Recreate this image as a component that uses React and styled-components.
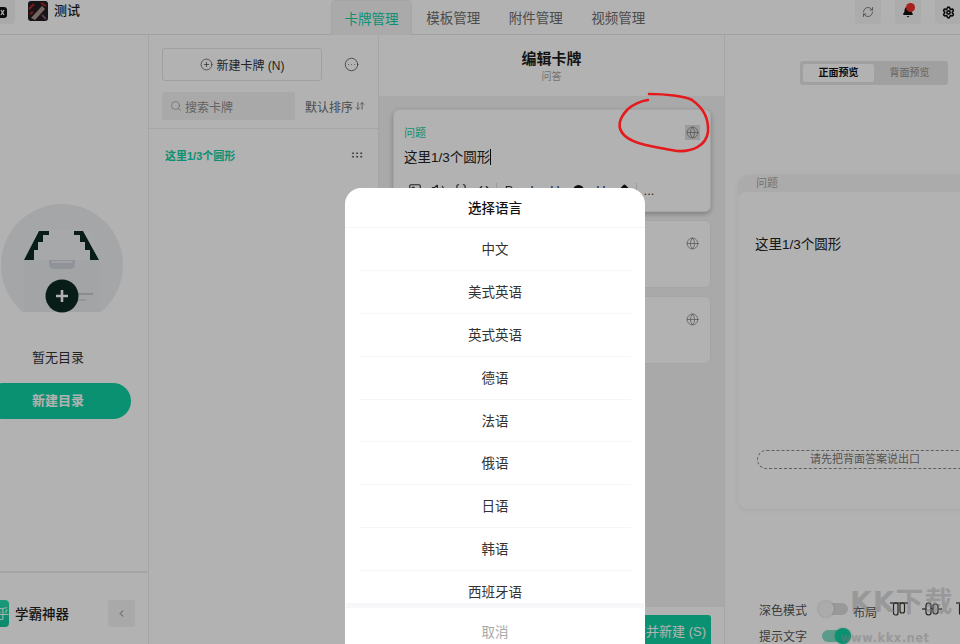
import React from "react";
import styled, { createGlobalStyle } from "styled-components";
import {
  ArrowDownUp,
  Bell,
  Braces,
  ChevronLeft,
  CircleEllipsis,
  CirclePlus,
  Code,
  Globe,
  GripHorizontal,
  Image,
  RefreshCw,
  Search,
  Settings,
  Volume2,
} from "lucide-react";

const GREEN = "#0fd0a4";
const FONT = `"Liberation Sans", "Noto Sans CJK SC", sans-serif`;

const GlobalStyle = createGlobalStyle`
  html, body {
    margin: 0;
    height: 100%;
    overflow: hidden;
    background: #fff;
  }
  body {
    font-family: ${FONT};
    color: #1d1d1d;
  }
  * { box-sizing: border-box; }
`;

const Viewport = styled.div`
  position: relative;
  width: 960px;
  height: 644px;
  overflow: hidden;
`;

const Shell = styled.div`
  display: flex;
  flex-direction: column;
  width: 1010px;
  height: 644px;
  margin-left: -15px;
`;

const TopBar = styled.header`
  display: flex;
  align-items: flex-end;
  height: 35px;
  flex: none;
  border-bottom: 1px solid #e6e6e6;
  background: #fff;
`;

const Brand = styled.div`
  display: flex;
  align-items: flex-start;
  width: 346px;
  height: 100%;
`;

const BackButton = styled.div`
  display: flex;
  align-items: center;
  width: 30px;
  height: 24px;
  background: #f4f4f4;
  border-radius: 0 0 4px 4px;
  svg { display: block; }
`;

const Avatar = styled.svg`
  width: 20px;
  height: 20px;
  margin: 1px 6px 0 13px;
  border-radius: 3px;
`;

const BrandName = styled.span`
  font-size: 13px;
  line-height: 22px;
  font-weight: 500;
`;

const Tabs = styled.nav`
  display: flex;
  height: 34px;
`;

const Tab = styled.div`
  width: ${(p) => (p.$active ? "81px" : "82.5px")};
  margin-bottom: -1px;
  text-align: center;
  font-size: 13.5px;
  line-height: 37px;
  color: ${(p) => (p.$active ? GREEN : "#6d6d6d")};
  ${(p) =>
    p.$active &&
    `
    background: #f4f4f4;
    border: 1px solid #ececec;
    border-bottom: 0;
    border-radius: 5px 5px 0 0;
  `}
`;

const TopActions = styled.div`
  display: flex;
  align-items: flex-start;
  gap: 14px;
  margin-left: auto;
  padding-right: 34px;
  height: 100%;
`;

const TopAction = styled.div`
  position: relative;
  display: flex;
  align-items: center;
  justify-content: center;
  width: 26px;
  height: 24px;
  background: #f6f6f6;
  border-radius: 0 0 4px 4px;
  color: #555;
`;

const BellDot = styled.span`
  position: absolute;
  top: 3px;
  left: 11px;
  width: 9px;
  height: 9px;
  border-radius: 50%;
  background: #f0302c;
`;

const Columns = styled.div`
  display: flex;
  flex: 1;
  min-height: 0;
`;

const Sidebar = styled.aside`
  display: flex;
  flex-direction: column;
  width: 164px;
  flex: none;
  border-right: 1px solid #ececec;
`;

const EmptyState = styled.div`
  display: flex;
  flex-direction: column;
  align-items: center;
  justify-content: flex-end;
  flex: 1;
  width: 146px;
  padding-bottom: 152px;
`;

const Illustration = styled.svg`
  width: 124px;
  height: 110px;
  margin-left: 10px;
  flex: none;
`;

const EmptyText = styled.div`
  margin-top: 35px;
  font-size: 13px;
  line-height: 20px;
  color: #333;
`;

const CreateButton = styled.div`
  width: 146px;
  height: 36px;
  margin-top: 15px;
  border-radius: 18px;
  background: ${GREEN};
  color: #fff;
  font-size: 13px;
  font-weight: 700;
  line-height: 36px;
  text-align: center;
`;

const SideFooter = styled.div`
  display: flex;
  align-items: center;
  height: 73px;
  flex: none;
  border-top: 2px solid #ececec;
  padding: 9px 13px 0 0;
`;

const AppLogo = styled.div`
  width: 24px;
  height: 27px;
  margin-right: 6px;
  border-radius: 0 4px 4px 0;
  background: linear-gradient(180deg, #26dcb0, #0fc49b);
  color: #e9fff8;
  font-size: 13px;
  line-height: 27px;
  text-align: right;
`;

const AppName = styled.span`
  font-size: 13.5px;
  font-weight: 500;
`;

const Collapse = styled.div`
  display: flex;
  align-items: center;
  justify-content: center;
  width: 27px;
  height: 27px;
  margin-left: auto;
  border-radius: 3px;
  background: #f3f3f3;
  color: #666;
`;

const CardColumn = styled.section`
  width: 230px;
  flex: none;
  border-right: 1px solid #ececec;
`;

const CardTools = styled.div`
  height: 94px;
  padding: 13px 13px 0 13px;
  border-bottom: 1px solid #eeeeee;
`;

const ToolRow = styled.div`
  display: flex;
  align-items: center;
  justify-content: space-between;
`;

const NewCard = styled.div`
  display: flex;
  align-items: center;
  justify-content: center;
  gap: 4px;
  width: 160px;
  height: 33px;
  border: 1px solid #e4e4e4;
  border-radius: 3px;
  font-size: 12px;
  color: #333;
`;

const MoreButton = styled.div`
  display: flex;
  margin-right: 6px;
  color: #444;
`;

const SearchBox = styled.div`
  display: flex;
  align-items: center;
  gap: 3px;
  width: 133px;
  height: 28px;
  padding-left: 8px;
  border-radius: 3px;
  background: #f3f3f3;
  color: #8d8d8d;
  font-size: 12px;
`;

const SortLabel = styled.div`
  display: flex;
  align-items: center;
  gap: 2px;
  color: #6d6d6d;
  font-size: 12px;
`;

const SearchRow = styled(ToolRow)`
  margin-top: 11px;
`;

const CardItem = styled.div`
  display: flex;
  align-items: center;
  justify-content: space-between;
  height: 52px;
  padding: 0 14px 0 16px;
  color: ${GREEN};
  font-size: 11px;
  font-weight: 700;
  svg { color: #555; }
`;

const Editor = styled.section`
  display: flex;
  flex-direction: column;
  width: 346px;
  flex: none;
  border-right: 1px solid #ececec;
`;

const EditorHead = styled.div`
  height: 61px;
  padding-top: 14px;
  flex: none;
  text-align: center;
`;

const EditorTitle = styled.div`
  font-size: 15px;
  line-height: 20px;
  font-weight: 700;
`;

const EditorSub = styled.div`
  font-size: 10px;
  line-height: 15px;
  color: #a5a5a5;
`;

const EditorBody = styled.div`
  display: flex;
  flex-direction: column;
  gap: 8px;
  flex: 1;
  padding: 13px 13px 0 14px;
  background: #f3f3f3;
`;

const FieldCard = styled.div`
  height: ${(p) => (p.$open ? "103px" : "68px")};
  padding: 14px 10px 0;
  border-radius: 6px;
  background: #fff;
  border: 1px solid #ededed;
  ${(p) => p.$open && "box-shadow: 0 2px 5px rgba(0, 0, 0, 0.25);"}
`;

const FieldHead = styled.div`
  display: flex;
  align-items: center;
  justify-content: space-between;
  height: 16px;
  color: ${GREEN};
  font-size: 11px;
`;

const GlobeBox = styled.span`
  display: flex;
  align-items: center;
  justify-content: center;
  width: 15px;
  height: 15px;
  color: #777;
  background: ${(p) => (p.$on ? "#dedede" : "transparent")};
`;

const FieldText = styled.div`
  margin-top: 9px;
  font-size: 13.5px;
  line-height: 18px;
  color: #222;
`;

const Caret = styled.span`
  display: inline-block;
  width: 1px;
  height: 16px;
  vertical-align: -3px;
  background: #111;
`;

const FormatBar = styled.div`
  display: flex;
  align-items: center;
  gap: 9px;
  margin-top: 15px;
  height: 16px;
  padding-left: 4px;
  font-size: 13px;
  color: #333;
`;

const FormatGlyph = styled.span`
  display: flex;
  justify-content: center;
  width: 14px;
`;

const FormatSep = styled.span`
  width: 1px;
  height: 15px;
  margin: 0 -4px;
  background: #ddd;
`;

const Dot = styled.span`
  display: block;
  width: ${(p) => (p.$diamond ? "9px" : "11px")};
  height: ${(p) => (p.$diamond ? "9px" : "11px")};
  background: #111;
  border-radius: ${(p) => (p.$diamond ? "1px" : "50%")};
  ${(p) => p.$diamond && "transform: rotate(45deg);"}
`;

const EditorFoot = styled.div`
  display: flex;
  justify-content: flex-end;
  height: 37px;
  flex: none;
  padding: 8px 13px 0 0;
`;

const SaveButton = styled.div`
  width: 150px;
  height: 29px;
  border-radius: 3px 3px 0 0;
  background: ${GREEN};
  color: #fff;
  font-size: 13px;
  line-height: 33px;
  text-align: right;
  padding-right: 5px;
`;

const Preview = styled.section`
  display: flex;
  flex-direction: column;
  flex: 1;
  min-width: 0;
  padding: 26px 0 0 13px;
`;

const Toggle = styled.div`
  display: flex;
  align-items: center;
  width: 148px;
  height: 24px;
  margin-left: 62px;
  padding: 3px;
  border-radius: 3px;
  background: #e6e6e6;
  font-size: 10px;
  text-align: center;
`;

const ToggleItem = styled.div`
  flex: 1;
  line-height: 18px;
  border-radius: 2px;
  font-weight: ${(p) => (p.$active ? 700 : 500)};
  color: ${(p) => (p.$active ? "#111" : "#9b9b9b")};
  background: ${(p) => (p.$active ? "#fff" : "transparent")};
`;

const PreviewCard = styled.div`
  display: flex;
  flex-direction: column;
  width: 270px;
  height: 337px;
  margin-top: 90px;
  border-radius: 10px;
  background: #f5f5f5;
  box-shadow: 0 1px 5px rgba(0, 0, 0, 0.06);
  overflow: hidden;
`;

const PreviewTag = styled.div`
  height: 17px;
  padding-left: 18px;
  font-size: 11px;
  line-height: 16px;
  color: #a5a5a5;
`;

const PreviewFace = styled.div`
  display: flex;
  flex-direction: column;
  flex: 1;
  padding: 41px 19px 0 17px;
  background: #fff;
  border-radius: 8px 0 0 0;
  font-size: 13.5px;
  color: #222;
`;

const HintPill = styled.div`
  width: 216px;
  height: 19px;
  margin: 197px 0 0 2px;
  border: 1px dashed #888;
  border-radius: 10px;
  font-size: 11px;
  line-height: 17px;
  text-align: center;
  color: #777;
`;

const Options = styled.div`
  display: grid;
  grid-template-columns: 59px 1fr;
  row-gap: 7px;
  align-items: center;
  margin-top: 89px;
  padding-left: 21px;
  font-size: 12px;
  color: #555;
`;

const OptionRow = styled.div`
  display: flex;
  align-items: center;
  gap: 5px;
`;

const Switch = styled.div`
  position: relative;
  width: ${(p) => (p.$on ? "28px" : "30px")};
  height: 12px;
  margin-left: ${(p) => (p.$on ? "4px" : "0")};
  border-radius: 6px;
  background: ${(p) => (p.$on ? "#82dec8" : "#dcdcdc")};
  &::after {
    content: "";
    position: absolute;
    top: -2px;
    left: ${(p) => (p.$on ? "13px" : "0")};
    width: 16px;
    height: 16px;
    border-radius: 50%;
    background: ${(p) => (p.$on ? GREEN : "#f5f5f5")};
    box-shadow: 0 0 2px rgba(0, 0, 0, 0.25);
  }
`;

const LayoutLabel = styled.span`
  padding-top: 5px;
`;

const LayoutIcon = styled.svg`
  width: 22px;
  height: 18px;
  margin-left: 6px;
  flex: none;
  fill: none;
  stroke: #333;
  stroke-width: 1.2;
`;

const Watermark = styled.div`
  position: absolute;
  left: 850px;
  top: 588px;
  z-index: 4;
  pointer-events: none;
  color: rgba(120, 120, 120, 0.45);
  font-family: "DejaVu Sans", "Noto Sans CJK SC", sans-serif;
  font-weight: 700;
  white-space: nowrap;
`;

const MarkBig = styled.div`
  font-size: 28px;
  line-height: 30px;
  letter-spacing: 1px;
`;

const MarkSmall = styled.div`
  margin: 14px 0 0 -10px;
  font-size: 11.5px;
  line-height: 12px;
  letter-spacing: 0.5px;
`;

const Mask = styled.div`
  position: absolute;
  inset: 0;
  z-index: 2;
  background: rgba(0, 0, 0, 0.3);
`;

const Scribble = styled.svg`
  position: absolute;
  inset: 0;
  z-index: 3;
  width: 960px;
  height: 644px;
  pointer-events: none;
`;

const Sheet = styled.div`
  position: absolute;
  left: 345px;
  top: 188px;
  z-index: 3;
  display: flex;
  flex-direction: column;
  width: 300px;
  height: 470px;
  border-radius: 16px 16px 0 0;
  background: #fff;
`;

const SheetTitle = styled.div`
  height: 40px;
  flex: none;
  border-bottom: 1px solid #f6f6f6;
  text-align: center;
  font-size: 13.5px;
  font-weight: 500;
  line-height: 41px;
  color: #111;
`;

const LangList = styled.div`
  height: 375px;
  flex: none;
  overflow: hidden;
`;

const LangRow = styled.div`
  height: 42.9px;
  margin: 0 14px;
  border-bottom: 1px solid #f6f6f6;
  text-align: center;
  font-size: 13.5px;
  line-height: 44px;
  color: #333;
`;

const SheetGap = styled.div`
  height: 5px;
  margin: 0 1px;
  flex: none;
  background: #f7f7f9;
`;

const CancelRow = styled.div`
  height: 48px;
  text-align: center;
  font-size: 13.5px;
  line-height: 49px;
  color: #a8a8a8;
`;

const LANGS = ["中文", "美式英语", "英式英语", "德语", "法语", "俄语", "日语", "韩语", "西班牙语"];

const TinyAvatar = () => (
  <Avatar viewBox="0 0 20 20">
    <rect width="20" height="20" fill="#241c22" />
    <path d="M3 17 L14 5 L17 8 L7 19 Z" fill="#a8978a" />
    <path d="M1 8 L6 3 M13 2 L18 5 M2 13 L5 11" stroke="#b02a2a" strokeWidth="2" />
    <path d="M14 14 L18 18" stroke="#6c5a70" strokeWidth="2" />
  </Avatar>
);

const EmptyArt = () => (
  <Illustration viewBox="0 0 124 110">
    <defs>
      <clipPath id="art-clip">
        <rect width="124" height="109" />
      </clipPath>
    </defs>
    <g clipPath="url(#art-clip)">
      <circle cx="61" cy="62" r="61" fill="#eceef1" />
      <path d="M36 27 H88 L98 57 H26 Z" fill="#f0f1f4" />
      <path d="M23 57 L38 28 H48 V32 H42 V39 H37 V47 H33 V57 Z" fill="#0c2a22" />
      <path d="M98 57 L82 28 H73 V32 H79 V39 H84 V47 H89 V57 Z" fill="#0c2a22" />
      <rect x="23" y="57" width="76" height="53" rx="5" fill="#e9ebee" />
      <path d="M48 57 H74 V61 Q74 66 69 66 H53 Q48 66 48 61 Z" fill="#cfd3d9" />
      <rect x="51" y="58" width="20" height="2" fill="#e6e8ec" />
      <rect x="76" y="90" width="16" height="2" fill="#c5c9cf" />
      <rect x="76" y="96" width="9" height="2" fill="#d3d6db" />
    </g>
    <circle cx="61" cy="93" r="16.5" fill="#0c2a22" />
    <path d="M61 87 V99 M55 93 H67" stroke="#fff" strokeWidth="2.6" />
  </Illustration>
);

const Pills = ({ vertical }) => (
  <LayoutIcon viewBox="0 0 22 18">
    {vertical ? (
      <>
        <path d="M2 3 H20" />
        <rect x="5.5" y="3" width="4.5" height="12" rx="2" />
        <rect x="12" y="3" width="4.5" height="10" rx="2" />
      </>
    ) : (
      <>
        <path d="M1 9 H21" />
        <rect x="5" y="3" width="5" height="12" rx="2.4" fill="#fff" />
        <rect x="12" y="4" width="5" height="10" rx="2.4" fill="#fff" />
      </>
    )}
  </LayoutIcon>
);

const Field = ({ open }) => (
  <FieldCard $open={open}>
    <FieldHead>
      <span>{open ? "问题" : ""}</span>
      <GlobeBox $on={open}>
        <Globe size={13} strokeWidth={1.3} />
      </GlobeBox>
    </FieldHead>
    {open && (
      <>
        <FieldText>
          这里1/3个圆形
          <Caret />
        </FieldText>
        <FormatBar>
          <FormatGlyph><Image size={14} /></FormatGlyph>
          <FormatGlyph><Volume2 size={14} /></FormatGlyph>
          <FormatGlyph><Braces size={14} /></FormatGlyph>
          <FormatGlyph><Code size={14} /></FormatGlyph>
          <FormatSep />
          <FormatGlyph>B</FormatGlyph>
          <FormatGlyph>I</FormatGlyph>
          <FormatGlyph>U</FormatGlyph>
          <FormatGlyph><Dot /></FormatGlyph>
          <FormatGlyph>U</FormatGlyph>
          <FormatGlyph><Dot $diamond /></FormatGlyph>
          <FormatSep />
          <FormatGlyph>...</FormatGlyph>
        </FormatBar>
      </>
    )}
  </FieldCard>
);

export default function App() {
  return (
    <Viewport>
      <GlobalStyle />
      <Shell>
        <TopBar>
          <Brand>
            <BackButton>
              <svg width="22" height="11" viewBox="0 0 22 11">
                <rect width="22" height="11" rx="3" fill="#111" />
                <path d="M16 3 L19 8 M19 3 L16 8" stroke="#fff" strokeWidth="1.3" />
              </svg>
            </BackButton>
            <TinyAvatar />
            <BrandName>测试</BrandName>
          </Brand>
          <Tabs>
            <Tab $active>卡牌管理</Tab>
            <Tab>模板管理</Tab>
            <Tab>附件管理</Tab>
            <Tab>视频管理</Tab>
          </Tabs>
          <TopActions>
            <TopAction>
              <RefreshCw size={12} strokeWidth={1.4} />
            </TopAction>
            <TopAction>
              <Bell size={12} fill="#111" color="#111" />
              <BellDot />
            </TopAction>
            <TopAction>
              <Settings size={13} strokeWidth={3} color="#111" />
            </TopAction>
          </TopActions>
        </TopBar>
        <Columns>
          <Sidebar>
            <EmptyState>
              <EmptyArt />
              <EmptyText>暂无目录</EmptyText>
              <CreateButton>新建目录</CreateButton>
            </EmptyState>
            <SideFooter>
              <AppLogo>乎</AppLogo>
              <AppName>学霸神器</AppName>
              <Collapse>
                <ChevronLeft size={11} />
              </Collapse>
            </SideFooter>
          </Sidebar>
          <CardColumn>
            <CardTools>
              <ToolRow>
                <NewCard>
                  <CirclePlus size={13} strokeWidth={1.2} />
                  新建卡牌 (N)
                </NewCard>
                <MoreButton>
                  <CircleEllipsis size={15} strokeWidth={1.2} />
                </MoreButton>
              </ToolRow>
              <SearchRow>
                <SearchBox>
                  <Search size={12} strokeWidth={1.3} />
                  搜索卡牌
                </SearchBox>
                <SortLabel>
                  默认排序
                  <ArrowDownUp size={10} />
                </SortLabel>
              </SearchRow>
            </CardTools>
            <CardItem>
              这里1/3个圆形
              <GripHorizontal size={14} strokeWidth={1.6} />
            </CardItem>
          </CardColumn>
          <Editor>
            <EditorHead>
              <EditorTitle>编辑卡牌</EditorTitle>
              <EditorSub>问答</EditorSub>
            </EditorHead>
            <EditorBody>
              <Field open />
              <Field />
              <Field />
            </EditorBody>
            <EditorFoot>
              <SaveButton>保存并新建 (S)</SaveButton>
            </EditorFoot>
          </Editor>
          <Preview>
            <Toggle>
              <ToggleItem $active>正面预览</ToggleItem>
              <ToggleItem>背面预览</ToggleItem>
            </Toggle>
            <PreviewCard>
              <PreviewTag>问题</PreviewTag>
              <PreviewFace>
                这里1/3个圆形
                <HintPill>请先把背面答案说出口</HintPill>
              </PreviewFace>
            </PreviewCard>
            <Options>
              <span>深色模式</span>
              <OptionRow>
                <Switch />
                <LayoutLabel>布局</LayoutLabel>
                <Pills vertical />
                <Pills />
                <Pills vertical />
              </OptionRow>
              <span>提示文字</span>
              <OptionRow>
                <Switch $on />
              </OptionRow>
            </Options>
          </Preview>
        </Columns>
      </Shell>
      <Mask />
      <Scribble viewBox="0 0 960 644">
        <path
          d="M649 94 C665 94 685 96 692 100 C702 107 709 118 708 132 C706 146 692 152 677 151 C660 148 635 145 625 136 C616 128 619 118 628 109 C634 104 641 101 648 100"
          fill="none"
          stroke="#e41a1c"
          strokeWidth="2.6"
          strokeLinecap="round"
        />
      </Scribble>
      <Sheet>
        <SheetTitle>选择语言</SheetTitle>
        <LangList>
          {LANGS.map((lang) => (
            <LangRow key={lang}>{lang}</LangRow>
          ))}
        </LangList>
        <SheetGap />
        <CancelRow>取消</CancelRow>
      </Sheet>
      <Watermark>
        <MarkBig>KK下载</MarkBig>
        <MarkSmall>www.kkx.net</MarkSmall>
      </Watermark>
    </Viewport>
  );
}
